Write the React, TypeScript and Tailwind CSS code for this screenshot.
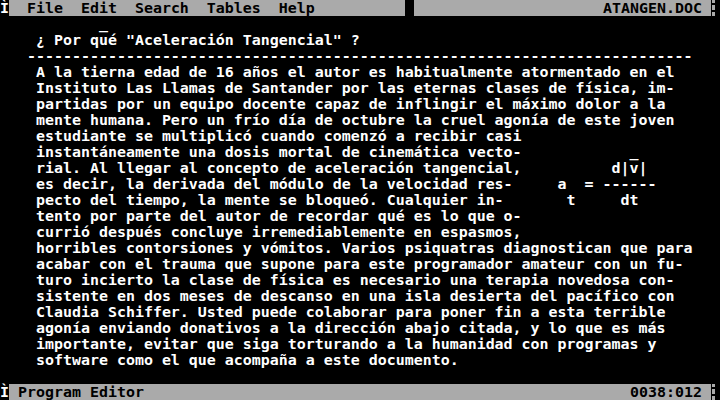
const GRAY = 'bg-[#aaaaaa]';

// builds a fixed 80 column line from [column, text] pieces
function line(...parts: [number, string][]) {
  let s = '';
  for (const [col, text] of parts) {
    s = s.padEnd(col, ' ') + text;
  }
  return s;
}

// rows 1..23 of the text screen
const body: string[] = [
  line([11, '_']),
  line([4, '¿ Por qué "Aceleración Tangencial" ?']),
  line([3, '-'.repeat(74)]),
  line([4, 'A la tierna edad de 16 años el autor es habitualmente atormentado en el']),
  line([4, 'Instituto Las Llamas de Santander por las eternas clases de física, im-']),
  line([4, 'partidas por un equipo docente capaz de inflingir el máximo dolor a la']),
  line([4, 'mente humana. Pero un frío día de octubre la cruel agonía de este joven']),
  line([4, 'estudiante se multiplicó cuando comenzó a recibir casi']),
  line([4, 'instantáneamente una dosis mortal de cinemática vecto-'], [70, '_']),
  line([4, 'rial. Al llegar al concepto de aceleración tangencial,'], [68, 'd|v|']),
  line([4, 'es decir, la derivada del módulo de la velocidad res-'], [62, 'a'], [65, '='], [67, '------']),
  line([4, 'pecto del tiempo, la mente se bloqueó. Cualquier in-'], [63, 't'], [69, 'dt']),
  line([4, 'tento por parte del autor de recordar qué es lo que o-']),
  line([4, 'currió después concluye irremediablemente en espasmos,']),
  line([4, 'horribles contorsiones y vómitos. Varios psiquatras diagnostican que para']),
  line([4, 'acabar con el trauma que supone para este programador amateur con un fu-']),
  line([4, 'turo incierto la clase de física es necesario una terapia novedosa con-']),
  line([4, 'sistente en dos meses de descanso en una isla desierta del pacífico con']),
  line([4, 'Claudia Schiffer. Usted puede colaborar para poner fin a esta terrible']),
  line([4, 'agonía enviando donativos a la dirección abajo citada, y lo que es más']),
  line([4, 'importante, evitar que siga torturando a la humanidad con programas y']),
  line([4, 'software como el que acompaña a este documento.']),
  '',
];

function BrokenBar() {
  return (
    <svg width="9" height="16" viewBox="0 0 9 16" className="block shrink-0">
      <rect x="1" y="0" width="3" height="3" fill="#aaaaaa" />
      <rect x="1" y="5" width="3" height="5" fill="#aaaaaa" />
      <rect x="1" y="12" width="3" height="4" fill="#aaaaaa" />
    </svg>
  );
}

function Corner() {
  return <span className="w-[9px] shrink-0 text-white">Ì</span>;
}

export default function App() {
  return (
    <div className="w-[720px] h-[400px] bg-black overflow-hidden font-['DejaVu_Sans_Mono','Liberation_Mono',monospace] font-bold text-[14.95px] leading-[16px] whitespace-pre">
      {/* menu bar */}
      <div className="flex h-[16px]">
        <Corner />
        <span className={`w-[396px] ${GRAY} text-black`}>  File  Edit  Search  Tables  Help</span>
        <span className="w-[9px]" />
        <span className={`w-[297px] ${GRAY} text-black text-right`}>ATANGEN.DOC </span>
        <BrokenBar />
      </div>

      {body.map((text, i) => (
        <div key={i} className="h-[16px] text-white">
          {text}
        </div>
      ))}

      {/* status bar */}
      <div className="flex h-[16px]">
        <Corner />
        <span className={`flex-1 ${GRAY} text-black flex justify-between`}>
          <span> Program Editor</span>
          <span>0038:012 </span>
        </span>
        <BrokenBar />
      </div>
    </div>
  );
}
